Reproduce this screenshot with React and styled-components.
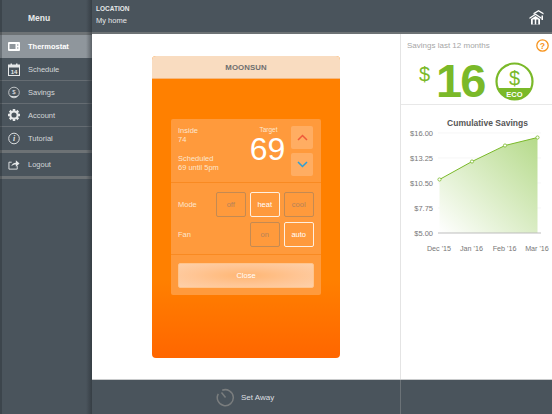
import React from "react";
import styled, { createGlobalStyle } from "styled-components";

const Global = createGlobalStyle`
  html, body { margin: 0; padding: 0; background: #fff; }
  body { font-family: "Liberation Sans", Arial, sans-serif; }
  * { box-sizing: border-box; }
`;
const Shell = styled.div`
  width: 552px; height: 414px; display: flex; overflow: hidden; background: #fff;
`;
const Sidebar = styled.aside`
  width: 92px; flex: none; background: #4a545c; display: flex; flex-direction: column;
  position: relative;
  &::after { content: ""; position: absolute; top: 0; bottom: 0; right: 0; width: 6px;
    background: linear-gradient(to right, rgba(30,35,40,0), rgba(30,35,40,.45)); pointer-events: none; }
  &::before { content: ""; position: absolute; top: 0; bottom: 0; left: 0; width: 2px;
    background: rgba(30,35,40,.3); pointer-events: none; }
`;
const MenuTitle = styled.div`
  height: 32px; display: flex; align-items: center; justify-content: center; padding: 3px 14px 0 0;
  font-size: 8.500px; font-weight: bold; color: #e8eaeb;
`;
const ThickRule = styled.div`
  height: ${p => p.$h || 3}px; background: #6d7275; flex: none;
`;
const Row = styled.div`
  height: ${p => p.$h || 23}px; display: flex; align-items: center; padding-left: 8px; gap: 8px; flex: none;
  font-size: 7.500px; color: ${p => (p.$active ? "#fff" : "#d4d7d9")};
  font-weight: ${p => (p.$active ? "bold" : "normal")};
  background: ${p => (p.$active ? "#8f969c" : "transparent")};
  border-bottom: ${p => (p.$plain ? "none" : "1px solid #656c72")};
`;
const IconSlot = styled.span`
  width: 12px; height: 14px; display: flex; align-items: center; justify-content: center; flex: none;
`;
const Main = styled.div`
  flex: 1; display: flex; flex-direction: column; min-width: 0;
`;
const Header = styled.header`
  height: 34px; flex: none; background: #4a545c; border-bottom: 2px solid #6d7275;
  display: flex; align-items: flex-start; justify-content: space-between; padding: 5px 8px 0 4px;
  svg { margin-top: 4px; }
`;
const Location = styled.div`
  color: #e6e8e9; line-height: 9px;
  b { display: block; font-size: 6.500px; line-height: 8px; }
  span { font-size: 7.500px; }
`;
const Content = styled.div`
  flex: 1; display: flex; min-height: 0;
`;
const Center = styled.div`
  width: 309px; flex: none; padding: 22px 0 0 60px; border-right: 1px solid #e4e4e4;
`;
const Card = styled.section`
  width: 188px; height: 302px; border-radius: 4px; overflow: hidden;
  background: linear-gradient(to bottom, #ff8000 74%, #ff6600 100%);
  display: flex; flex-direction: column;
`;
const CardHead = styled.div`
  height: 23px; flex: none; background: #f9dcc0; border-bottom: 1px solid #f7b77c;
  display: flex; align-items: center; justify-content: center;
  font-size: 7.800px; font-weight: bold; color: #6f6f6f; letter-spacing: .1px;
`;
const Panel = styled.div`
  width: 150px; height: 176px; margin: 40px 0 0 19px; background: #ff9a3c; border-radius: 2px;
  display: flex; flex-direction: column;
`;
const TopBlock = styled.div`
  height: 64px; flex: none; display: flex; border-bottom: 1px solid #f98a22; padding: 7px 8px 0 7px; color: #fde6cf;
  font-size: 7.500px; line-height: 9px;
`;
const Info = styled.div`
  width: 62px; flex: none; p { margin: 0 0 10px; }
`;
const Target = styled.div`
  width: 49px; flex: none; text-align: center; color: #fff; margin-left: 3px;
  small { display: block; font-size: 6.500px; line-height: 7px; color: #fde6cf; margin-left: 2px; }
  strong { display: block; font-weight: normal; font-size: 32px; line-height: 24px; margin-top: 4px; }
`;
const Arrows = styled.div`
  display: flex; flex-direction: column; gap: 4px; margin-left: -1px;
`;
const ArrowBtn = styled.div`
  width: 22px; height: 23px; border-radius: 2px; background: #ffad62;
  display: flex; align-items: center; justify-content: center;
`;
const Controls = styled.div`
  height: 72px; flex: none; border-bottom: 1px solid #f98a22; padding: 9px 7px 0 7px;
  display: flex; flex-direction: column; gap: 5px;
`;
const ControlRow = styled.div`
  height: 25px; display: flex; align-items: center; gap: 3.500px; color: #fde6cf; font-size: 7.500px;
  span:first-child { margin-right: auto; }
`;
const Toggle = styled.div`
  width: 30.500px; height: 25px; border-radius: 2px; display: flex; align-items: center; justify-content: center;
  font-size: 7.500px; border: 1.300px solid ${p => (p.$on ? "#fff0e0" : "#c48a52")};
  color: ${p => (p.$on ? "#fff" : "#b5825a")};
`;
const CloseBtn = styled.div`
  width: 136px; height: 25px; margin: 8px 0 0 7px; border-radius: 2px; color: #fff; font-size: 7.500px;
  display: flex; align-items: center; justify-content: center; border: 1px solid #ffc48c;
  background: radial-gradient(ellipse at center, #ffb673 0%, #ffc594 55%, #fdd0aa 100%);
`;
const Right = styled.div`
  flex: 1; display: flex; flex-direction: column; min-width: 0;
`;
const SavingsBox = styled.div`
  height: 71px; flex: none; border-bottom: 1px solid #e8e8e8; padding: 6px 3px 0 6px;
`;
const SavingsHead = styled.div`
  display: flex; justify-content: space-between; align-items: center; height: 11px;
  font-size: 8px; color: #a6a6a6;
`;
const Amount = styled.div`
  display: flex; align-items: center; margin-top: 10px; padding-left: 12px; height: 40px; color: #7ab929;
`;
const Dollar = styled.span`
  font-size: 20px; line-height: 19px; align-self: flex-start; margin-top: 4px; width: 17px;
`;
const Big = styled.span`
  font-size: 47px; font-weight: bold; line-height: 40px; letter-spacing: -2px; width: 48px; text-align: left;
`;
const ChartBox = styled.div`
  flex: 1; display: flex; flex-direction: column; align-items: center;
`;
const ChartTitle = styled.div`
  font-size: 8.500px; font-weight: bold; color: #555; margin-top: 13px; line-height: 11px; margin-left: 22px;
`;
const BottomBar = styled.footer`
  height: 35px; flex: none; background: #4a545c; border-top: 1px solid #c9cbcc; display: flex;
`;
const AwaySlot = styled.div`
  width: 309px; flex: none; border-right: 1px solid #6b7277; display: flex; align-items: center; padding-left: 124px; gap: 6px;
  font-size: 8px; color: #dcdfe0;
`;

const c = "#e6e8e9";
const ThermoIcon = () => (
  <svg width="12" height="9" viewBox="0 0 24 18"><rect x="0" y="0" width="24" height="18" rx="2" fill="#fff"/><rect x="3" y="4" width="12" height="10" fill="#8f969c"/><circle cx="19.500" cy="6" r="1.500" fill="#8f969c"/><circle cx="19.500" cy="12" r="1.500" fill="#8f969c"/></svg>
);
const CalIcon = () => (
  <svg width="12" height="13" viewBox="0 0 24 26">
    <rect x="1" y="4" width="22" height="21" fill="none" stroke={c} strokeWidth="2"/>
    <rect x="1" y="4" width="22" height="5" fill={c}/>
    <rect x="5" y="1" width="3" height="6" fill={c}/><rect x="16" y="1" width="3" height="6" fill={c}/>
    <text x="12" y="22" fontSize="12" fontWeight="bold" fill={c} textAnchor="middle" fontFamily="Liberation Sans">14</text>
  </svg>
);
const CoinIcon = () => (
  <svg width="13" height="13" viewBox="0 0 26 26">
    <circle cx="13" cy="13" r="11.500" fill="none" stroke={c} strokeWidth="1.600"/>
    <path d="M3.500 19a11.500 11.500 0 0 0 19 0q-9.500 4-19 0z" fill={c}/>
    <text x="13" y="17" fontSize="13" fill={c} textAnchor="middle" fontFamily="Liberation Sans">$</text>
  </svg>
);
const GearIcon = () => (
  <svg width="12" height="12" viewBox="0 0 24 24">
    <circle cx="12" cy="12" r="7.200" fill="none" stroke={c} strokeWidth="4"/>
    {[0,45,90,135,180,225,270,315].map(a => <rect key={a} x="9.500" y="0" width="5" height="5" fill={c} transform={`rotate(${a} 12 12)`}/>)}
  </svg>
);
const InfoIcon = () => (
  <svg width="13" height="13" viewBox="0 0 26 26">
    <circle cx="13" cy="13" r="11.500" fill="none" stroke={c} strokeWidth="2"/>
    <text x="13" y="19" fontSize="17" fontWeight="bold" fontStyle="italic" fill={c} textAnchor="middle" fontFamily="Liberation Serif">i</text>
  </svg>
);
const LogoutIcon = () => (
  <svg width="13" height="11" viewBox="0 0 26 22">
    <path d="M8 6H2v15h18v-7" fill="none" stroke={c} strokeWidth="2"/>
    <path d="M7 15c1-5 5-8 10-8V2l8 7-8 7v-5c-4 0-7 1-10 4z" fill={c}/>
  </svg>
);
const HomeIcon = () => (
  <svg width="15" height="16" viewBox="0 0 30 32">
    <path d="M9 8 19 2l10 6v3l-10-6-10 6z" fill="#fff"/>
    <path d="M1 17 13 9l12 8v3L13 12 1 20z" fill="#fff"/>
    <path d="M4 20 13 14l9 6v11H4z" fill="#fff"/>
    <rect x="7.500" y="21" width="4" height="10" fill="#4a545c"/><rect x="14.500" y="21" width="4" height="10" fill="#4a545c"/>
    <path d="M25 13h3v9h-3z" fill="#fff"/>
  </svg>
);
const Chevron = ({ up, color }) => (
  <svg width="11" height="7" viewBox="0 0 11 7">
    <path d={up ? "M1 6l4.500-4.500L10 6" : "M1 1l4.500 4.500L10 1"} fill="none" stroke={color} strokeWidth="1.500"/>
  </svg>
);
const HelpIcon = () => (
  <svg width="13" height="13" viewBox="0 0 24 24">
    <circle cx="12" cy="12" r="10.500" fill="none" stroke="#f7941e" strokeWidth="2.400"/>
    <text x="12" y="18" fontSize="16" fontWeight="bold" fill="#f7941e" textAnchor="middle" fontFamily="Liberation Sans">?</text>
  </svg>
);
const EcoBadge = () => (
  <svg width="39" height="39" viewBox="0 0 39 39" style={{ marginLeft: 11 }}>
    <circle cx="19.500" cy="19.500" r="18" fill="#fff" stroke="#7ab929" strokeWidth="2.200"/>
    <path d="M2.700 26h33.600A18 18 0 0 1 2.700 26z" fill="#7ab929"/>
    <text x="19.500" y="23" fontSize="20" fill="#7ab929" textAnchor="middle" fontFamily="Liberation Sans">$</text>
    <text x="19.500" y="34.500" fontSize="7.500" fontWeight="bold" fill="#fff" textAnchor="middle" fontFamily="Liberation Sans">ECO</text>
  </svg>
);
const AwayIcon = () => (
  <svg width="19" height="19" viewBox="0 0 19 19">
    <path d="M6.200 2.300A8 8 0 1 1 2.300 5.800" fill="none" stroke="#7a7d7e" strokeWidth="1.500"/>
    <path d="M5.500 4.500 9.500 9.500" stroke="#7a7d7e" strokeWidth="1.500"/>
  </svg>
);
const pts = [[38.5, 51.5], [71, 33.5], [104, 17.5], [136.5, 9.5]];
const Chart = () => (
  <svg width="151" height="130" viewBox="0 0 151 130" style={{ display: "block", marginTop: -1 }}>
    <defs>
      <linearGradient id="area" x1="0" y1="1" x2="1" y2="0">
        <stop offset="0" stopColor="#fff" />
        <stop offset="1" stopColor="#b5da8a" />
      </linearGradient>
    </defs>
    {[5, 30, 55, 80].map(y => <line key={y} x1="37" x2="140" y1={y} y2={y} stroke="#f2f2f2" strokeWidth=".7"/>)}
    <polygon points={`38.5,105 ${pts.map(p => p.join(",")).join(" ")} 136.5,105`} fill="url(#area)"/>
    <line x1="37" x2="140" y1="105" y2="105" stroke="#bdbdbd" strokeWidth="1"/>
    <polyline points={pts.map(p => p.join(",")).join(" ")} fill="none" stroke="#7ab929" strokeWidth="1"/>
    {pts.map(p => <circle key={p[0]} cx={p[0]} cy={p[1]} r="1.600" fill="#fff" stroke="#7ab929" strokeWidth=".8"/>)}
    <g fontFamily="Liberation Sans" fontSize="7.500" fill="#777">
      {[["$16.00", 8], ["$13.25", 33], ["$10.50", 58], ["$7.75", 83], ["$5.00", 108]].map(([t, y]) => (
        <text key={t} x="32" y={y} textAnchor="end">{t}</text>
      ))}
    </g>
    <g fontFamily="Liberation Sans" fontSize="7.200" fill="#777">
      {[["Dec '15", 38], ["Jan '16", 70.5], ["Feb '16", 103.5], ["Mar '16", 136]].map(([t, x]) => (
        <text key={t} x={x} y="123" textAnchor="middle">{t}</text>
      ))}
    </g>
  </svg>
);

export default function App() {
  return (
    <Shell>
      <Global />
      <Sidebar>
        <MenuTitle>Menu</MenuTitle>
        <ThickRule />
        <Row $active $plain><IconSlot><ThermoIcon /></IconSlot>Thermostat</Row>
        <Row><IconSlot><CalIcon /></IconSlot>Schedule</Row>
        <Row><IconSlot><CoinIcon /></IconSlot>Savings</Row>
        <Row><IconSlot><GearIcon /></IconSlot>Account</Row>
        <Row $plain><IconSlot><InfoIcon /></IconSlot>Tutorial</Row>
        <ThickRule />
        <Row $plain><IconSlot><LogoutIcon /></IconSlot>Logout</Row>
        <ThickRule />
      </Sidebar>
      <Main>
        <Header>
          <Location><b>LOCATION</b><span>My home</span></Location>
          <HomeIcon />
        </Header>
        <Content>
          <Center>
            <Card>
              <CardHead>MOONSUN</CardHead>
              <Panel>
                <TopBlock>
                  <Info>
                    <p>Inside<br />74</p>
                    <p>Scheduled<br />69 until 5pm</p>
                  </Info>
                  <Target><small>Target</small><strong>69</strong></Target>
                  <Arrows>
                    <ArrowBtn><Chevron up color="#ef5a3a" /></ArrowBtn>
                    <ArrowBtn><Chevron color="#2a9fd8" /></ArrowBtn>
                  </Arrows>
                </TopBlock>
                <Controls>
                  <ControlRow><span>Mode</span><Toggle>off</Toggle><Toggle $on>heat</Toggle><Toggle>cool</Toggle></ControlRow>
                  <ControlRow><span>Fan</span><Toggle>on</Toggle><Toggle $on>auto</Toggle></ControlRow>
                </Controls>
                <CloseBtn>Close</CloseBtn>
              </Panel>
            </Card>
          </Center>
          <Right>
            <SavingsBox>
              <SavingsHead>Savings last 12 months<HelpIcon /></SavingsHead>
              <Amount><Dollar>$</Dollar><Big>16</Big><EcoBadge /></Amount>
            </SavingsBox>
            <ChartBox>
              <ChartTitle>Cumulative Savings</ChartTitle>
              <Chart />
            </ChartBox>
          </Right>
        </Content>
        <BottomBar>
          <AwaySlot><AwayIcon />Set Away</AwaySlot>
        </BottomBar>
      </Main>
    </Shell>
  );
}
